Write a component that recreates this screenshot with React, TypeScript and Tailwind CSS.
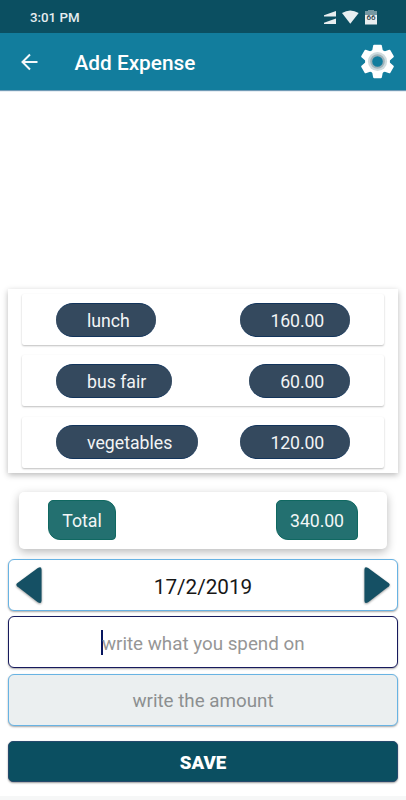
type Expense = { name: string; amount: string };

const expenses: Expense[] = [
  { name: "lunch", amount: "160.00" },
  { name: "bus fair", amount: "60.00" },
  { name: "vegetables", amount: "120.00" },
];

function StatusBar() {
  return (
    <div className="flex h-[33px] items-center bg-[#0b4f61] pr-[28px] pl-[30px]">
      <span className="mt-[3px] flex-1 text-[13.300px] font-medium text-[#e6edef]">3:01 PM</span>
      <svg className="mt-px h-4 w-[54px]" viewBox="0 0 54 16" fill="#e8eef0">
        <path d="M12 2v5.500H0v-1.300zM12 9.500V15H0v-1.300z" />
        <path d="M18 4Q26.300-1 34.700 4L26.300 14.800z" />
        <path d="M41 2h3V1h6v1h3v4H41z" fill="#7598a3" />
        <path d="M41 6h12v9.500H41z" />
        <text x="42.500" y="11" fontSize="8" fontWeight="500" fill="#263c44">66</text>
      </svg>
    </div>
  );
}

function AppBar() {
  return (
    <header className="z-10 flex h-[57px] items-center bg-[#127d9d] pr-[11px] pl-[20px] shadow-[0_1px_1px_#719bb6]">
      <svg className="h-[18px] w-[18px]" viewBox="0 0 18 18" fill="none" stroke="#f4f8fa" strokeWidth="2">
        <path d="M17.500 9H2.500M10 1.500L2.500 9l7.500 7.500" />
      </svg>
      <h1 className="mt-0.5 ml-[36.500px] flex-1 text-[20.800px] leading-6 font-medium text-white">Add Expense</h1>
      <svg className="h-[35px] w-[35px]" viewBox="-17.500 -17.500 35 35">
        <g fill="#fff">
          <circle r="12.400" />
          {[0, 60, 120, 180, 240, 300].map((angle) => (
            <path key={angle} transform={`rotate(${angle})`} d="M-5.500-10l1.200-6q.2-.8 1-.8h6.600q.8 0 1 .8l1.200 6z" />
          ))}
        </g>
        <circle r="9.600" fill="#cfdbde" />
        <circle r="6.300" fill="#127d9d" stroke="#9fb2b9" strokeWidth="2" />
      </svg>
    </header>
  );
}

function ExpenseRow({ name, amount }: Expense) {
  const pill =
    "flex h-[34px] items-center rounded-full border-y border-[#12345b] bg-[#34495e] pr-[26px] pl-[31px] pt-[3px] text-[17.700px] text-[#f2f4f5]";
  return (
    <li className="flex h-[51px] items-center justify-between rounded-[2px] bg-white px-[34px] shadow-[0_1px_2px_rgba(0,0,0,0.26)]">
      <span className={pill}>{name}</span>
      <span className={`${pill} tracking-[-0.15px]`}>{amount}</span>
    </li>
  );
}

function Total() {
  const badge =
    "flex h-10 items-center justify-center rounded-tl-[5px] rounded-tr-[12px] rounded-br-[4px] rounded-bl-[12px] border border-[#106861] bg-[#237070] pt-0.5 text-[17.700px] text-[#f2f6f6]";
  return (
    <section className="mx-[19px] mt-[19px] flex h-[57px] items-center justify-between rounded-[5px] bg-white px-[29px] pb-px shadow-[0_3px_10px_rgba(0,0,0,0.28)]">
      <span className={`${badge} w-[68px]`}>Total</span>
      <span className={`${badge} w-[82px] tracking-[-0.1px]`}>340.00</span>
    </section>
  );
}

function Arrow({ flip = false }: { flip?: boolean }) {
  return (
    <svg
      className="h-[38px] w-[26px] drop-shadow-[0_1px_1px_rgba(0,0,0,0.4)]"
      viewBox="0 0 28 40"
      preserveAspectRatio="none"
      fill="#155064"
    >
      <path
        transform={flip ? "translate(28 0) scale(-1 1)" : undefined}
        d="M1.200 18.200L23.500 2q4-2.200 4 1.600v33q0 3.700-4 1.500L1.200 21.300Q-.5 19.700 1.200 18.200z"
      />
    </svg>
  );
}

export default function App() {
  const field = "flex h-[52px] items-center rounded-[6px] shadow-[0_1px_2px_rgba(0,0,0,0.35)]";
  return (
    <div className="flex h-[800px] w-[406px] flex-col overflow-hidden bg-white font-[Roboto,sans-serif]">
      <StatusBar />
      <AppBar />
      <ul className="mx-2 mt-[199px] flex h-[184px] flex-col gap-[10.300px] bg-white px-[14px] pt-[5px] shadow-[0_2px_6px_rgba(0,0,0,0.28)]">
        {expenses.map((expense) => (
          <ExpenseRow key={expense.name} {...expense} />
        ))}
      </ul>
      <Total />
      <div className="mx-[8.400px] mt-[10px] flex flex-col gap-[5.300px]">
        <div className={`${field} justify-between border border-[#68b3e3] bg-white px-[6.500px]`}>
          <Arrow />
          <span className="pt-1.5 text-[20.700px] text-[#171717]">17/2/2019</span>
          <Arrow flip />
        </div>
        <div className={`${field} justify-center border border-[#171a5d] bg-white`}>
          <span className="mr-[-1.500px] h-[25px] w-[2px] bg-[#08165f]" />
          <span className="pt-[3px] text-[18.800px] text-[#969696]">write what you spend on</span>
        </div>
        <div className={`${field} justify-center border border-[#68b3e3] bg-[#ebeff0]`}>
          <span className="pt-[2px] text-[18.800px] text-[#8c8f90]">write the amount</span>
        </div>
      </div>
      <button className="mx-[8.400px] mt-[15.400px] h-[41px] rounded-[5px] border border-[#25496c] bg-[#0b4f61] pt-[4px] text-[18.700px] font-black text-white shadow-[0_1px_2px_rgba(0,0,0,0.4)]">
        SAVE
      </button>
      <div className="mt-auto h-1 bg-[#f6f7f7]" />
    </div>
  );
}
